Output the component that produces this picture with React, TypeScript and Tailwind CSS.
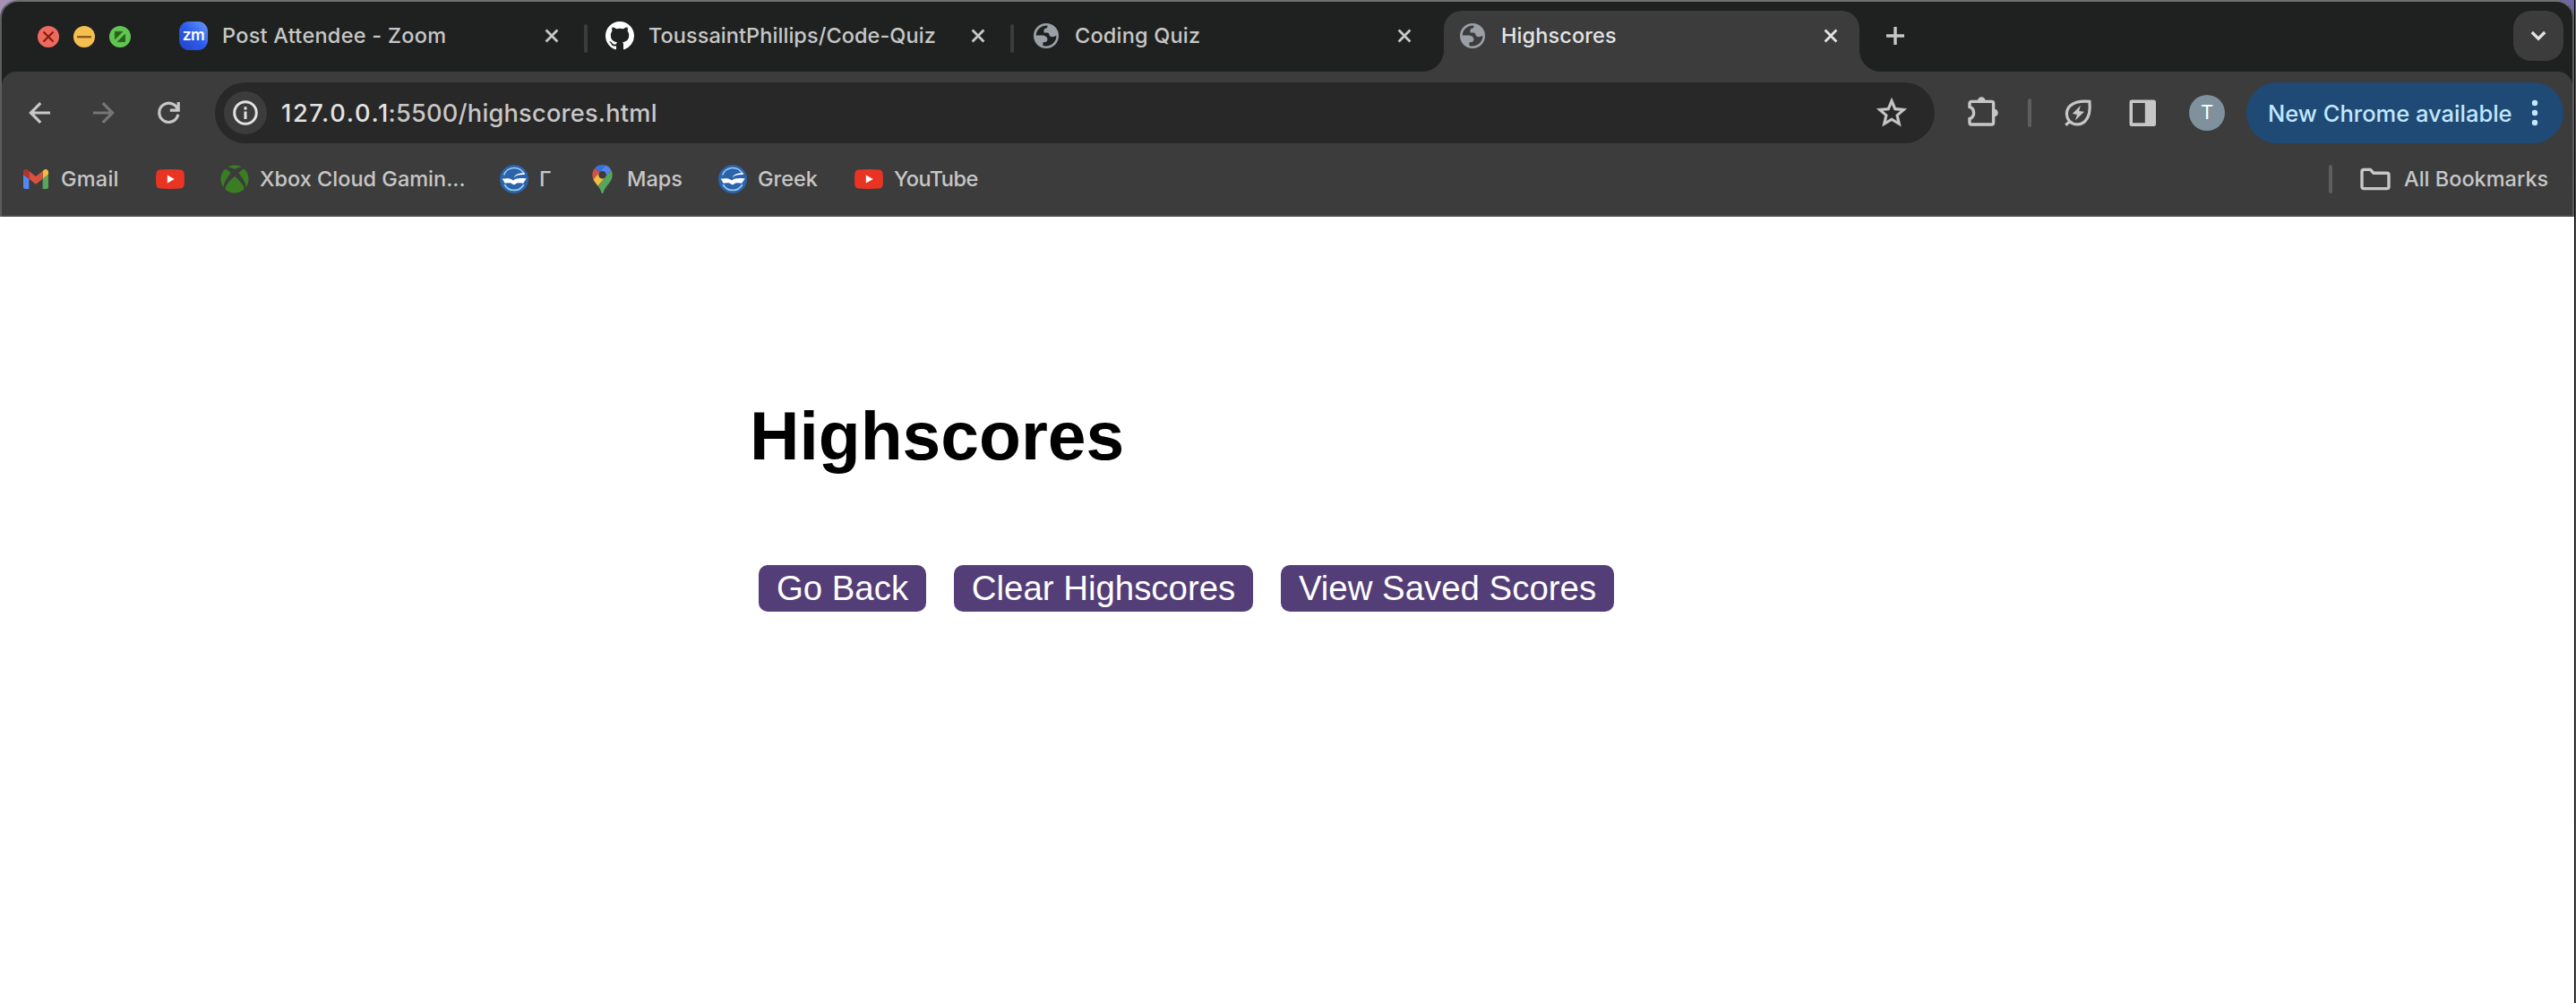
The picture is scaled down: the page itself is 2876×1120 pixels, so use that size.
import type { ReactNode } from "react";
import { FaXbox } from "react-icons/fa";

function GitHubIcon() {
  return (
    <svg className="size-8" viewBox="0 0 16 16" fill="#fff">
      <path d="M8 0C3.58 0 0 3.58 0 8c0 3.54 2.29 6.53 5.47 7.59.4.07.55-.17.55-.38 0-.19-.01-.82-.01-1.49-2.01.37-2.53-.49-2.69-.94-.09-.23-.48-.94-.82-1.13-.28-.15-.68-.52-.01-.53.63-.01 1.08.58 1.23.82.72 1.21 1.87.87 2.33.66.07-.52.28-.87.51-1.07-1.78-.2-3.64-.89-3.64-3.95 0-.87.31-1.59.82-2.15-.08-.2-.36-1.02.08-2.12 0 0 .67-.21 2.2.82.64-.18 1.32-.27 2-.27.68 0 1.36.09 2 .27 1.53-1.04 2.2-.82 2.2-.82.44 1.1.16 1.92.08 2.12.51.56.82 1.27.82 2.15 0 3.07-1.87 3.75-3.65 3.95.29.25.54.73.54 1.48 0 1.07-.01 1.93-.01 2.2 0 .21.15.46.55.38A8.013 8.013 0 0016 8c0-4.42-3.58-8-8-8z" />
    </svg>
  );
}

function GlobeIcon() {
  return (
    <svg className="size-7" viewBox="0 0 28 28">
      <path
        fill="#9aa0a6"
        fillRule="evenodd"
        d="M14 0A14 14 0 1 1 14 28A14 14 0 1 1 14 0ZM2.7 13.6A11.4 11.4 0 0 1 15.5 2.7C15.8 4.8 14.6 5.9 12.2 6C11.4 7.4 11.2 9 11.5 10.6H15C17 10.8 17.6 12 17.6 13.8C19.2 15.6 22.5 15.6 25.4 13.8A11.4 11.4 0 0 1 10.4 24.9V21.2C13 20.8 15.5 21 15.4 18C15.4 14.8 12.4 13.8 9.5 13.6Z"
      />
    </svg>
  );
}

function ZoomIcon() {
  return (
    <span className="flex size-8 items-center justify-center rounded-[11px] bg-linear-to-tr from-[#2443c4] via-[#2d5bec] to-[#6a9af5] font-['Inter'] text-[17.5px] leading-none font-semibold tracking-[-0.5px] text-white">
      <span className="pb-[3px]">zm</span>
    </span>
  );
}

function CloseIcon({ active }: { active?: boolean }) {
  return (
    <svg className="size-4 shrink-0" viewBox="0 0 16 16" fill="none" stroke={active ? "#e3e3e3" : "#c7c7c7"} strokeWidth="2.8">
      <path d="M1.6 1.6L14.4 14.4M14.4 1.6L1.6 14.4" />
    </svg>
  );
}

function Tab({ icon, active, children }: { icon: ReactNode; active?: boolean; children: ReactNode }) {
  return (
    <div
      className={
        "relative flex h-[68px] w-[464px] shrink-0 items-center self-end pb-3 pl-4 " +
        (active ? "rounded-t-[20px] bg-[#3c3c3c] text-[#e3e3e3]" : "text-[#c7c7c7]")
      }
    >
      {active && (
        <>
          <span className="absolute bottom-0 -left-6 size-6 bg-[radial-gradient(circle_at_0_0,#1f2120_23.5px,#3c3c3c_24.5px)]" />
          <span className="absolute -right-6 bottom-0 size-6 bg-[radial-gradient(circle_at_100%_0,#1f2120_23.5px,#3c3c3c_24.5px)]" />
        </>
      )}
      <span className="flex size-8 items-center justify-center">{icon}</span>
      <span className="ml-4 w-[360px] text-[23.5px] leading-8 whitespace-nowrap">{children}</span>
      <CloseIcon active={active} />
    </div>
  );
}

function TabGap({ line }: { line?: boolean }) {
  return <span className={"mx-1 mt-1 h-8 w-1 shrink-0 rounded-full " + (line ? "bg-[#3c3c3c]" : "")} />;
}

function TitleBar() {
  return (
    <div className="flex h-[78px] items-center">
      <div className="ml-10 flex gap-4">
        <svg className="size-6" viewBox="0 0 24 24">
          <circle cx="12" cy="12" r="12" fill="#ed6a5e" />
          <path d="M6.5 6.5L17.5 17.5M17.5 6.5L6.5 17.5" stroke="#8c1a10" strokeWidth="2.2" />
        </svg>
        <svg className="size-6" viewBox="0 0 24 24">
          <circle cx="12" cy="12" r="12" fill="#f5bf4f" />
          <path d="M4 12.2H20" stroke="#8f591d" strokeWidth="2.4" />
        </svg>
        <svg className="size-6" viewBox="0 0 24 24">
          <circle cx="12" cy="12" r="12" fill="#61c554" />
          <path d="M6.3 15V6.3H15ZM17.7 9V17.7H9Z" fill="#296016" stroke="#296016" strokeWidth=".6" />
        </svg>
      </div>
      <div className="ml-[38px] flex h-full items-center">
        <Tab icon={<ZoomIcon />}>
          <span className="tracking-[0.26px]">Post Attendee - Zoom</span>
        </Tab>
        <TabGap line />
        <Tab icon={<GitHubIcon />}>
          <span className="tracking-[0.06px]">ToussaintPhillips/Code-Quiz</span>
        </Tab>
        <TabGap line />
        <Tab icon={<GlobeIcon />}>
          <span className="tracking-[0.2px]">Coding Quiz</span>
        </Tab>
        <TabGap />
        <Tab active icon={<GlobeIcon />}>
          <span className="tracking-[0.1px]">Highscores</span>
        </Tab>
      </div>
      <svg className="mb-[2px] ml-[30px] size-5" viewBox="0 0 20 20" stroke="#c7c7c7" strokeWidth="3.4">
        <path d="M0 10H20M10 0V20" />
      </svg>
      <button className="mr-[10px] mb-[2px] ml-auto flex size-14 items-center justify-center rounded-[20px] bg-[#3c3c3c]">
        <svg className="h-3 w-[18px]" viewBox="0 0 18 12" fill="none" stroke="#e3e3e3" strokeWidth="3.2">
          <path d="M1.8 2L9 9.2L16.2 2" />
        </svg>
      </button>
    </div>
  );
}

function NavButtons() {
  return (
    <div className="ml-[30px] flex gap-12">
      <svg className="size-6 overflow-visible" viewBox="0 0 24 24" fill="none" stroke="#c7c7c7" strokeWidth="3.2">
        <path d="M24 12H3M13.2 1.2L2.4 12L13.2 22.8" />
      </svg>
      <svg className="size-6 overflow-visible" viewBox="0 0 24 24" fill="none" stroke="#757575" strokeWidth="3.2">
        <path d="M0 12H21M10.8 1.2L21.6 12L10.8 22.8" />
      </svg>
      <svg className="size-6 overflow-visible" viewBox="0 0 24 24" fill="none" stroke="#c7c7c7" strokeWidth="3.2">
        <path d="M22.6 9A10.6 10.6 0 1 0 22.8 13.8M23.2 0V9.2H13.8" />
      </svg>
    </div>
  );
}

function Omnibox() {
  return (
    <div className="ml-10 flex h-[68px] w-[1920px] shrink-0 items-center rounded-full bg-[#282828] pr-7 pl-[10px]">
      <span className="flex size-12 items-center justify-center rounded-full bg-[#3c3c3c]">
        <svg className="size-7" viewBox="0 0 28 28" fill="none" stroke="#e3e3e3" strokeWidth="3">
          <circle cx="14" cy="14" r="12.3" />
          <path d="M14 12.5V21M14 7.2V10.4" />
        </svg>
      </span>
      <span className="ml-4 flex flex-1 pt-px text-[27.2px] leading-9 whitespace-nowrap">
        <span className="w-[119.5px] tracking-[1.65px] text-[#e3e3e3]">127.0.0.1</span>
        <span className="tracking-[0.22px] text-[#c7c7c7]">:5500/highscores.html</span>
      </span>
      <svg className="size-10" viewBox="0 0 24 24" fill="#c7c7c7" stroke="#c7c7c7" strokeWidth=".3">
        <path d="M22 9.24l-7.19-.62L12 2 9.19 8.63 2 9.24l5.46 4.73L5.82 21 12 17.27 18.18 21l-1.63-7.03L22 9.24zM12 15.4l-3.76 2.27 1-4.28-3.32-2.88 4.38-.38L12 6.1l1.71 4.04 4.38.38-3.32 2.88 1 4.28L12 15.4z" />
      </svg>
    </div>
  );
}

function Toolbar() {
  return (
    <div className="flex h-[92px] items-center">
      <NavButtons />
      <Omnibox />
      <svg className="ml-8 size-10" viewBox="0 0 40 40" fill="none" stroke="#c7c7c7" strokeWidth="3.4">
        <path d="M7 13.4V9.4A2 2 0 0 1 9 7.4H31.6A2 2 0 0 1 33.6 9.4V31A2 2 0 0 1 31.6 33H9A2 2 0 0 1 7 31V26.6C10 25.6 11.6 23 11.6 20S10 14.4 7 13.4Z" />
        <path d="M16 6.5A4.3 4.3 0 0 1 24.6 6.5ZM34.5 15.7A4.3 4.3 0 0 1 34.5 24.3Z" fill="#c7c7c7" stroke="none" />
      </svg>
      <span className="ml-8 h-8 w-1 rounded-full bg-[#5e5e5e]" />
      <svg className="ml-8 size-10" viewBox="0 0 40 40" fill="none" stroke="#c7c7c7" strokeWidth="3.2">
        <path d="M32.9 7.3C33.8 15.5 32.6 24 28.3 28.9C23.6 34 15.4 34.2 10.9 29.6C6 24.6 6.4 16.6 11.4 12C16.4 7.6 24 6.6 32.9 7.3ZM6.3 33.7L11 29.4" />
        <path d="M22.9 11.8L13.8 21L19 22L16.9 28.6L27 18.8L21.2 18Z" fill="#c7c7c7" stroke="none" />
      </svg>
      <svg className="ml-8 size-10" viewBox="0 0 40 40">
        <path fill="#c7c7c7" fillRule="evenodd" d="M8 5.5H32.5A2.5 2.5 0 0 1 35 8V32.5A2.5 2.5 0 0 1 32.5 35H8A2.5 2.5 0 0 1 5.5 32.5V8A2.5 2.5 0 0 1 8 5.5ZM9 9V31.2H22.8V9Z" />
      </svg>
      <span className="ml-8 flex size-10 items-center justify-center rounded-full bg-[#7e919d] font-['Roboto'] text-[22px] leading-none text-white">T</span>
      <button className="ml-6 flex h-[68px] w-[354px] items-center rounded-full bg-[#1f4a75] pl-6 text-[#c2e7ff]">
        <span className="w-[282px] pt-px text-left text-[25.5px] leading-9 font-medium whitespace-nowrap">New Chrome available</span>
        <svg className="ml-[10px] h-8 w-3" viewBox="0 0 12 32" fill="currentColor">
          <circle cx="6" cy="5" r="3.2" />
          <circle cx="6" cy="16" r="3.2" />
          <circle cx="6" cy="27" r="3.2" />
        </svg>
      </button>
    </div>
  );
}

function GmailIcon() {
  return (
    <svg className="h-[22px] w-7" viewBox="52 42 88 66" preserveAspectRatio="none">
      <path fill="#5288ef" d="M58 108h14V74L52 59v43c0 3.32 2.69 6 6 6" />
      <path fill="#58a65c" d="M120 108h14c3.32 0 6-2.69 6-6V59l-20 15" />
      <path fill="#f3bd42" d="M120 48v26l20-15v-8c0-7.42-8.47-11.65-14.4-7.2" />
      <path fill="#d85140" d="M72 74V48l24 18 24-18v26L96 92" />
      <path fill="#b3342b" d="M52 51v8l20 15V48l-5.6-4.2c-5.94-4.45-14.4-.22-14.4 7.2" />
    </svg>
  );
}

function YouTubeIcon() {
  return (
    <svg className="h-[22px] w-8" viewBox="0 0 32 22">
      <path fill="#e93423" d="M5 .4Q16-.3 27 .4Q31 .6 31.5 4Q32.4 11 31.5 18Q31 21.4 27 21.6Q16 22.3 5 21.6Q1 21.4.5 18Q-.4 11 .5 4Q1 .6 5 .4Z" />
      <path fill="#fff" d="M12.8 6.4V15.6L20.8 11Z" />
    </svg>
  );
}

function BookIcon() {
  return (
    <svg className="size-8" viewBox="0 0 32 32">
      <circle cx="16" cy="16" r="16" fill="#2b64ab" />
      <path d="M4.6 11.5A12.3 12.3 0 0 1 27 10M5.2 22A12.3 12.3 0 0 0 26.8 22" fill="none" stroke="#9ccbf0" strokeWidth="1.6" />
      <path d="M2.5 15.6C7 15 12 14.6 15 17.4C18 14.8 23.5 14.6 29.8 15.4L27.6 18.2C27.2 20 26.4 21 24.6 20.6C21.8 20 19 19.8 17.6 21.6C16.8 22.4 15 22.4 14.2 21.6C12.4 19.8 10 20 7.4 20.5C5.6 20.9 4.8 20 4.6 18.4Z" fill="#fff" />
      <path d="M15.6 14.6C17 10.2 21.5 9 28 9.2L27.6 11C22 10.8 18 11.4 15.6 14.6Z" fill="#fff" />
    </svg>
  );
}

function MapsIcon() {
  return (
    <svg className="h-8 w-[23px]" viewBox="0 0 92.3 132.3">
      <path fill="#3a6fdc" d="M60.2 2.2C55.8.8 51 0 46.1 0 32 0 19.3 6.4 10.8 16.5l21.8 18.3L60.2 2.2z" />
      <path fill="#d85140" d="M10.8 16.5C4.1 24.5 0 34.9 0 46.1c0 8.7 1.7 15.7 4.6 22l28-33.3-21.8-18.3z" />
      <path fill="#5383ec" d="M46.2 28.5c9.8 0 17.7 7.9 17.7 17.7 0 4.3-1.6 8.3-4.2 11.4 0 0 13.9-16.6 27.5-32.7-5.6-10.8-15.3-19-27-22.7L32.6 34.8c3.3-3.8 8.1-6.3 13.6-6.3" />
      <path fill="#f3bd42" d="M46.2 63.8c-9.8 0-17.7-7.9-17.7-17.7 0-4.3 1.5-8.3 4.1-11.3l-28 33.3c4.8 10.6 12.8 19.2 21 29.9l34.1-40.5c-3.3 3.9-8.1 6.3-13.5 6.3" />
      <path fill="#58a55c" d="M59.1 109.2c15.4-24.1 33.3-35 33.3-63 0-7.7-1.9-14.9-5.2-21.3L25.6 98c2.6 3.4 5.3 7.3 7.9 11.3 9.4 14.5 6.8 23.1 12.8 23.1s3.4-8.7 12.8-23.2" />
    </svg>
  );
}

function Bookmark({ icon, size, label }: { icon: ReactNode; size: string; label?: ReactNode }) {
  return (
    <div className={"flex shrink-0 items-center gap-3 " + size}>
      <span className="flex size-8 shrink-0 items-center justify-center">{icon}</span>
      {label}
    </div>
  );
}

function BookmarksBar() {
  return (
    <div className="flex h-[68px] items-center pr-7 pb-3 pl-[22px] text-[23.5px] leading-8 whitespace-nowrap text-[#c7c7c7]">
      <Bookmark size="w-[150px]" icon={<GmailIcon />} label={<span className="tracking-[0.2px]">Gmail</span>} />
      <Bookmark size="w-[72px]" icon={<YouTubeIcon />} />
      <Bookmark size="w-[312px]" icon={<FaXbox className="size-8 text-[#3a7d22]" />} label={<span>Xbox Cloud Gamin...</span>} />
      <Bookmark size="w-[98px]" icon={<BookIcon />} label={<span>Γ</span>} />
      <Bookmark size="w-[146px]" icon={<MapsIcon />} label={<span>Maps</span>} />
      <Bookmark size="w-[152px]" icon={<BookIcon />} label={<span>Greek</span>} />
      <Bookmark size="w-[150px]" icon={<YouTubeIcon />} label={<span className="tracking-[-0.55px]">YouTube</span>} />
      <span className="ml-auto h-8 w-1 rounded-full bg-[#5e5e5e]" />
      <svg className="ml-7 size-10" viewBox="0 0 40 40" fill="none" stroke="#c7c7c7" strokeWidth="3.4">
        <path d="M7 9.4H14.4L18 13.2H33A2 2 0 0 1 35 15.2V28.6A2 2 0 0 1 33 30.6H7A2 2 0 0 1 5 28.6V11.4A2 2 0 0 1 7 9.4Z" />
      </svg>
      <span className="ml-3 w-[160px]">All Bookmarks</span>
    </div>
  );
}

function PageButton({ size, children }: { size: string; children: ReactNode }) {
  return (
    <button className={"h-[52px] rounded-[10px] bg-[#543e78] text-center text-[38.4px] leading-[52px] whitespace-nowrap text-white " + size}>
      {children}
    </button>
  );
}

export default function App() {
  return (
    <div className="flex h-[1120px] w-[2876px] overflow-hidden bg-white">
      <div className="w-[2874px]">
        <div className="bg-linear-to-r from-[#a591b5] to-[#6d66a6]">
          <header className="h-[242px] rounded-t-[20px] border-x-2 border-t-2 border-x-[#5c5e5d] border-t-[#6c6f6e] bg-[#1f2120] font-['Inter',sans-serif] font-[450]">
            <TitleBar />
            <div className="rounded-t-2xl border-b-2 border-[#484848] bg-[#3c3c3c]">
              <Toolbar />
              <BookmarksBar />
            </div>
          </header>
        </div>
        <main className="pt-[206px] pl-[837px] font-['Liberation_Sans',Arial,sans-serif]">
          <h1 className="text-[76.8px] leading-[77px] font-bold text-black">Highscores</h1>
          <div className="mt-[106px] ml-[10px] flex gap-[31px]">
            <PageButton size="w-[187px]">Go Back</PageButton>
            <PageButton size="w-[334px]">Clear Highscores</PageButton>
            <PageButton size="w-[372px]">View Saved Scores</PageButton>
          </div>
        </main>
      </div>
      <div className="w-[2px] border-l border-black bg-linear-to-b from-[#6d66a6] via-[#4a4763] via-20% to-[#555555]" />
    </div>
  );
}
